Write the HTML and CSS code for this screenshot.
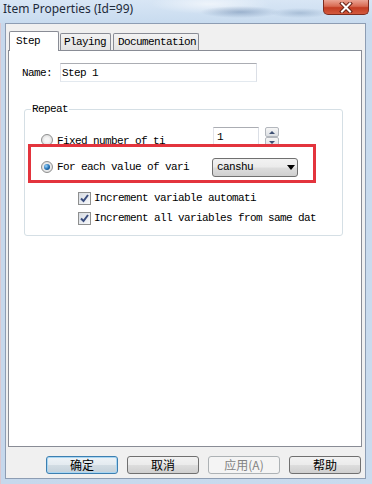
FILE: index.html
```html
<!DOCTYPE html>
<html lang="en">
<head>
  <meta charset="UTF-8">
  <meta name="viewport" content="width=device-width, initial-scale=1.0">
  <title>Item Properties</title>
  <link rel="stylesheet" href="styles.css">
</head>
<body>
  <div class="window">
    <!-- Title bar -->
    <div class="titlebar">
      <span class="title">Item Properties (Id=99)</span>
      <div class="close-btn">
        <svg width="14" height="11" viewBox="0 0 14 11">
          <path d="M3 1.5 L11 9.5 M11 1.5 L3 9.5" stroke="#6a2418" stroke-width="4" stroke-linecap="square"/>
          <path d="M3 1.5 L11 9.5 M11 1.5 L3 9.5" stroke="#ffffff" stroke-width="2" stroke-linecap="square"/>
        </svg>
      </div>
    </div>

    <div class="client">
      <!-- Tabs -->
      <div class="tabs">
        <div class="tab active">Step</div>
        <div class="tab playing">Playing</div>
        <div class="tab docs">Documentation</div>
      </div>

      <div class="tab-panel">
        <div class="name-row">
          <span class="label">Name:</span>
          <div class="textbox name-box">Step 1</div>
        </div>

        <fieldset class="group">
          <legend>Repeat</legend>

          <div class="option-row fixed">
            <span class="radio"></span>
            <span class="option-label">Fixed number of ti</span>
            <div class="textbox count-box">1</div>
            <div class="spin">
              <span class="spin-btn">
                <svg width="6" height="3" viewBox="0 0 6 3"><path d="M0 3 L3 0 L6 3 Z" fill="#3d4f72"/></svg>
              </span>
              <span class="spin-btn">
                <svg width="6" height="3" viewBox="0 0 6 3"><path d="M0 0 L6 0 L3 3 Z" fill="#3d4f72"/></svg>
              </span>
            </div>
          </div>

          <div class="option-row">
            <span class="radio checked"></span>
            <span class="option-label">For each value of vari</span>
            <div class="combo">canshu<span class="combo-arrow"></span></div>
          </div>

          <div class="check-row first">
            <span class="checkbox">
              <svg width="11" height="11" viewBox="0 0 11 11"><path d="M2 5.5 L4.5 8 L9 2" fill="none" stroke="#3a4d7e" stroke-width="2"/></svg>
            </span>
            Increment variable automati
          </div>
          <div class="check-row">
            <span class="checkbox">
              <svg width="11" height="11" viewBox="0 0 11 11"><path d="M2 5.5 L4.5 8 L9 2" fill="none" stroke="#3a4d7e" stroke-width="2"/></svg>
            </span>
            Increment all variables from same dat
          </div>
        </fieldset>
      </div>

      <!-- Dialog buttons -->
      <div class="buttons">
        <button class="btn default">确定</button>
        <button class="btn">取消</button>
        <button class="btn disabled">应用(A)</button>
        <button class="btn">帮助</button>
      </div>
    </div>

    <!-- red annotation box -->
    <div class="highlight"></div>
  </div>
</body>
</html>
```

FILE: styles.css
```css
body {
  margin: 0;
  font-family: 'Liberation Mono', 'DejaVu Sans Mono', monospace;
  font-size: 11px;
  letter-spacing: -0.6px;
  color: #000000;
}

.window {
  position: relative;
  width: 372px;
  height: 484px;
  box-sizing: border-box;
  padding: 0 6px 5px 5px;
  display: flex;
  flex-direction: column;
  background: linear-gradient(90deg, #dcc8d0 0, #dcc8d0 1px, #c6d8ec 1px, #c9dbee 100%);
}

/* Title bar */
.titlebar {
  height: 23px;
  margin: 0 -6px 0 -5px;
  padding-left: 3px;
  display: flex;
  align-items: flex-start;
  background:
    radial-gradient(ellipse 40px 6px at 240px 12px, rgba(90, 120, 160, 0.45), transparent),
    radial-gradient(ellipse 30px 5px at 300px 13px, rgba(110, 140, 175, 0.4), transparent),
    radial-gradient(ellipse 60px 10px at 210px 4px, rgba(255, 255, 255, 0.6), transparent),
    linear-gradient(#d8e6f5, #c8dbef);
}

.title {
  font-family: 'Noto Sans', 'Open Sans', sans-serif;
  font-size: 12px;
  letter-spacing: 0;
  line-height: 18px;
  color: #1e2a3a;
}

.close-btn {
  margin-left: auto;
  margin-right: 3px;
  width: 46px;
  height: 15px;
  box-sizing: border-box;
  border: 1px solid #7d2c1f;
  border-top: none;
  border-radius: 0 0 5px 5px;
  background: linear-gradient(#eba494, #d86a52 45%, #c33c22 55%, #d35a3e);
  display: flex;
  align-items: center;
  justify-content: center;
}

/* Client area */
.client {
  flex: 1;
  display: flex;
  flex-direction: column;
  background: #f0f0f0;
  border: 1px solid #8d9db3;
  padding: 7px 3px 4px 2px;
}

.tabs {
  display: flex;
  align-items: flex-end;
  height: 20px;
  margin-bottom: -1px;
  padding-left: 1px;
}

.tab {
  height: 17px;
  box-sizing: border-box;
  margin-bottom: 1px;
  border: 1px solid #898c95;
  border-bottom: none;
  border-radius: 2px 2px 0 0;
  background: linear-gradient(#f3f3f3, #e3e3e3);
  line-height: 16px;
  white-space: nowrap;
}

.tab.active {
  width: 50px;
  height: 20px;
  margin-bottom: 0;
  padding-left: 6px;
  line-height: 18px;
  background: #ffffff;
  position: relative;
  z-index: 1;
}

.tab.playing {
  width: 51px;
  margin-left: 1px;
  padding-left: 3px;
}

.tab.docs {
  width: 86px;
  margin-left: 2px;
  padding-left: 4px;
}

.tab-panel {
  flex: 1;
  background: #ffffff;
  border: 1px solid #898c95;
  padding: 12px 0 0 13px;
}

.name-row {
  display: flex;
  align-items: center;
  height: 19px;
}

.label {
  width: 38px;
}

.textbox {
  box-sizing: border-box;
  border: 1px solid;
  border-color: #abadb3 #dbdfe6 #e3e9ef #e2e3ea;
  background: #ffffff;
  display: flex;
  align-items: center;
}

.name-box {
  width: 197px;
  height: 19px;
  padding-left: 1px;
}

/* Repeat group */
.group {
  margin: 21px 0 0 2px;
  width: 319px;
  box-sizing: border-box;
  border: 1px solid #d5dfe5;
  border-radius: 3px;
  padding: 11px 6px 7px 6px;
}

.group legend {
  padding: 0 1px;
  line-height: 13px;
}

.option-row {
  display: flex;
  align-items: center;
  height: 20px;
  padding-left: 10px;
}

.option-row + .option-row {
  margin-top: 10px;
}

.option-row.fixed {
  align-items: flex-start;
}

.option-row.fixed .radio {
  margin-top: 7px;
}

.option-row.fixed .option-label {
  margin-top: 8px;
  line-height: 12px;
}

.radio {
  flex: none;
  position: relative;
  width: 12px;
  height: 12px;
  margin-right: 4px;
  box-sizing: border-box;
  border-radius: 50%;
  border: 1px solid #8e8f8f;
  background: radial-gradient(circle, #f6f6f6 30%, #d0d0d0);
}

.radio.checked::after {
  content: '';
  position: absolute;
  left: 2px;
  top: 2px;
  width: 6px;
  height: 6px;
  border-radius: 50%;
  background: radial-gradient(circle at 35% 35%, #9ad6ff, #1f6cb0 55%, #0e3d6e);
}

.option-label {
  flex: none;
  width: 155px;
  overflow: hidden;
  white-space: nowrap;
}

.count-box {
  width: 46px;
  height: 20px;
  margin-left: 1px;
  padding-left: 3px;
}

.spin {
  margin-left: 6px;
  width: 14px;
  height: 20px;
  display: flex;
  flex-direction: column;
}

.spin-btn {
  height: 10px;
  box-sizing: border-box;
  border: 1px solid #b3b7bd;
  border-radius: 2px;
  background: linear-gradient(#f6f6f6, #dcdfe3);
  display: flex;
  align-items: center;
  justify-content: center;
}

.combo {
  width: 86px;
  height: 19px;
  box-sizing: border-box;
  border: 1px solid #707070;
  border-radius: 3px;
  padding-left: 4px;
  display: flex;
  align-items: center;
  background: linear-gradient(#f2f2f2 0, #ebebeb 48%, #dddddd 52%, #cfcfcf 100%);
}

.combo-arrow {
  margin-left: auto;
  margin-right: 2px;
  width: 0;
  height: 0;
  border-left: 4px solid transparent;
  border-right: 4px solid transparent;
  border-top: 5px solid #000000;
}

.check-row {
  display: flex;
  align-items: center;
  height: 20px;
  padding-left: 47px;
  white-space: nowrap;
}

.check-row.first {
  margin-top: 11px;
}

.checkbox {
  flex: none;
  width: 13px;
  height: 13px;
  margin-right: 3px;
  box-sizing: border-box;
  border: 1px solid #8e8f8f;
  background: linear-gradient(135deg, #d6dbe2, #f8f9fb);
  display: flex;
  align-items: center;
  justify-content: center;
}

/* Buttons */
.buttons {
  display: flex;
  justify-content: flex-end;
  gap: 9px;
  height: 18px;
  margin-top: 9px;
  padding-right: 1px;
}

.btn {
  width: 72px;
  height: 18px;
  box-sizing: border-box;
  padding: 0;
  border: 1px solid #707070;
  border-radius: 3px;
  background: linear-gradient(#f2f2f2 0, #ebebeb 48%, #dddddd 52%, #cfcfcf 100%);
  font-family: 'Noto Sans CJK SC', sans-serif;
  font-size: 12px;
  line-height: 16px;
  letter-spacing: 0;
  color: #000000;
}

.btn.default {
  border-color: #3c7fb1;
  background: linear-gradient(#eef3f7 0, #e4ebf0 48%, #d2dce3 52%, #c4d1da 100%);
  box-shadow: inset 0 0 0 1px #a9d6f2;
}

.btn.disabled {
  border-color: #adb2b5;
  background: #f4f4f4;
  color: #838383;
}

/* red annotation rectangle drawn over the dialog */
.highlight {
  position: absolute;
  left: 28px;
  top: 144px;
  width: 288px;
  height: 39px;
  box-sizing: border-box;
  border: 3px solid #e3343d;
}
```
